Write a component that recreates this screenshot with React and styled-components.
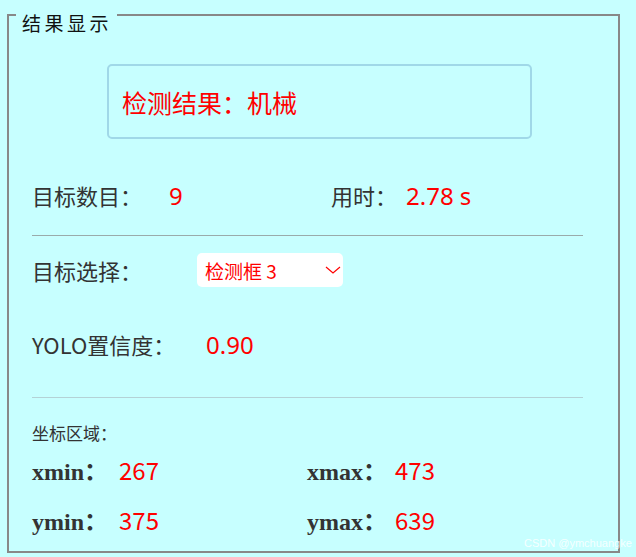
import React from "react";
import styled, { createGlobalStyle } from "styled-components";

const GlobalStyle = createGlobalStyle`
  html, body {
    margin: 0;
    padding: 0;
    background: #c7ffff;
  }
  body {
    width: 636px;
    height: 557px;
    overflow: hidden;
    position: relative;
    font-family: "Noto Sans CJK SC", "Noto Sans", sans-serif;
  }
`;

const Panel = styled.section`
  position: relative;
  box-sizing: border-box;
  width: 613px;
  margin: 14px 0 0 7px;
  border: 2px solid #888;
  padding: 48px 35px 17px 23px;
`;

const Legend = styled.span`
  position: absolute;
  top: -2px;
  left: 7px;
  padding: 0 5px 0 6px;
  background: #c7ffff;
  font-family: "Liberation Serif", "Noto Sans CJK SC", serif;
  font-size: 19px;
  line-height: 22px;
  letter-spacing: 3.5px;
  color: #111;
`;

const ResultBox = styled.div`
  box-sizing: border-box;
  width: 425px;
  height: 75px;
  margin-left: 75px;
  padding-left: 13px;
  border: 2px solid #a0d8e8;
  border-radius: 5px;
  display: flex;
  align-items: center;
  color: #ff0000;
  font-size: 25px;
`;

const Row = styled.div`
  display: flex;
  align-items: center;
  height: ${(p) => p.$h || 30}px;
  margin-top: ${(p) => p.$mt}px;
  font-size: 22px;
`;

const Label = styled.span`
  flex: 0 0 ${(p) => p.$w}px;
  color: #333;
  white-space: nowrap;
`;

const Value = styled.span`
  flex: 0 0 ${(p) => (p.$w ? `${p.$w}px` : "auto")};
  font-family: "Noto Sans", "Noto Sans CJK SC", sans-serif;
  font-size: 24px;
  color: #ff0000;
  white-space: nowrap;
`;

const Divider = styled.hr`
  margin: ${(p) => p.$mt}px 0 0;
  border: none;
  border-top: 1px solid ${(p) => p.$c};
  height: 0;
`;

const Select = styled.div`
  box-sizing: border-box;
  width: 146px;
  height: 34px;
  padding: 0 2px 0 8px;
  border-radius: 5px;
  background: #fff;
  display: flex;
  align-items: center;
  justify-content: space-between;
  color: #ff0000;
  font-size: 19px;
`;

const Caption = styled.div`
  margin-top: 23px;
  height: 24px;
  line-height: 24px;
  font-size: 17px;
  color: #333;
`;

const CoordGrid = styled.div`
  display: grid;
  grid-template-columns: 87px 188px 88px 1fr;
  grid-auto-rows: 30px;
  row-gap: 20px;
  margin-top: 9px;
  align-items: center;
`;

const CoordLabel = styled.span`
  font-family: "Liberation Serif", "Noto Sans CJK SC", serif;
  font-weight: bold;
  font-size: 24px;
  color: #333;
`;

const CoordValue = styled.span`
  font-size: 24px;
  color: #ff0000;
`;

const Watermark = styled.div`
  position: absolute;
  left: 524px;
  top: 537px;
  font-family: "Liberation Sans", sans-serif;
  font-size: 11px;
  color: rgba(255, 255, 255, 0.85);
  white-space: nowrap;
`;

const Chevron = () => (
  <svg width="16" height="8" viewBox="0 0 16 8" fill="none">
    <polyline points="1,1 8,7 15,1" stroke="#ff0000" strokeWidth="1.2" />
  </svg>
);

const coords = [
  ["xmin：", 267, "xmax：", 473],
  ["ymin：", 375, "ymax：", 639],
];

export default function App() {
  return (
    <>
      <GlobalStyle />
      <Panel>
        <Legend>结果显示</Legend>
        <ResultBox>检测结果：机械</ResultBox>

        <Row $mt={41}>
          <Label $w={137}>目标数目：</Label>
          <Value $w={162}>9</Value>
          <Label $w={75}>用时：</Label>
          <Value>2.78 s</Value>
        </Row>
        <Divider $mt={25} $c="#9aabab" />

        <Row $mt={17} $h={34}>
          <Label $w={165}>目标选择：</Label>
          <Select>
            <span>检测框 3</span>
            <Chevron />
          </Select>
        </Row>

        <Row $mt={42}>
          <Label $w={174}>YOLO置信度：</Label>
          <Value>0.90</Value>
        </Row>
        <Divider $mt={38} $c="#b4d2d6" />

        <Caption>坐标区域：</Caption>
        <CoordGrid>
          {coords.map(([a, av, b, bv]) => (
            <React.Fragment key={a}>
              <CoordLabel>{a}</CoordLabel>
              <CoordValue>{av}</CoordValue>
              <CoordLabel>{b}</CoordLabel>
              <CoordValue>{bv}</CoordValue>
            </React.Fragment>
          ))}
        </CoordGrid>
      </Panel>
      <Watermark>CSDN @ymchuangke</Watermark>
    </>
  );
}
